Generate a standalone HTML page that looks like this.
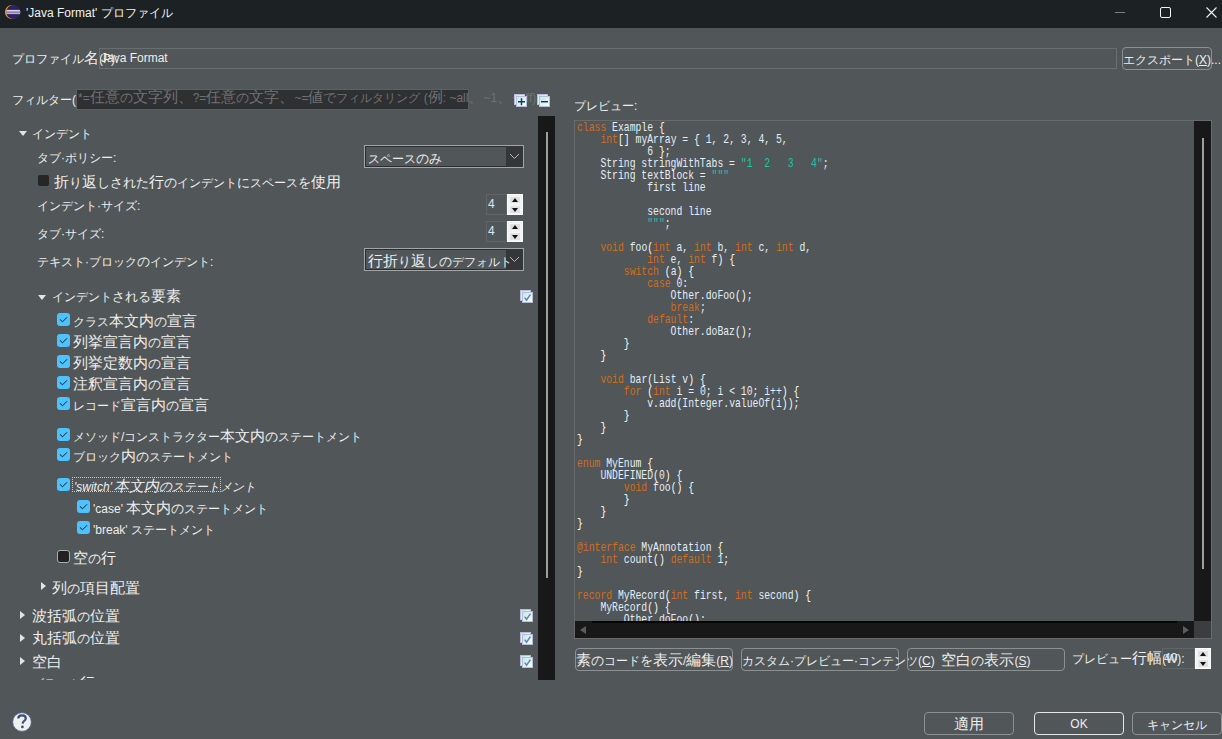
<!DOCTYPE html>
<html><head><meta charset="utf-8">
<style>
*{box-sizing:border-box}
html,body{margin:0;padding:0}
body{width:1222px;height:739px;overflow:hidden;position:relative;background:#515658;color:#eeeeee;font-family:"Liberation Sans",sans-serif;font-size:12px}
.a{position:absolute}
.t{position:absolute;white-space:nowrap;line-height:14px}
#title{left:0;top:0;width:1222px;height:28px;background:#1c2124}
.fld{position:absolute;border:1px solid #6b6e6f}
.btn{position:absolute;border:1px solid #8d9091;border-radius:4px;text-align:center;line-height:20px;white-space:nowrap}
.cb{position:absolute;width:13px;height:13px;border-radius:3px;background:#4cc2ff}
.cb svg{position:absolute;left:0;top:0}
.cbo{position:absolute;width:13px;height:13px;border-radius:3px;background:#222222;border:1px solid #aeaeae}
.cbn{position:absolute;width:11px;height:11px;border-radius:2px;background:#262626}
.tri-d{position:absolute;width:0;height:0;border-left:4px solid transparent;border-right:4px solid transparent;border-top:5px solid #e4e4e4}
.tri-r{position:absolute;width:0;height:0;border-top:4px solid transparent;border-bottom:4px solid transparent;border-left:5px solid #e4e4e4}
.combo{position:absolute;border:1px solid #a3a5a6;background:#515658}
.combo .in{position:absolute;left:0;top:0;right:0;bottom:0;border:1px solid #2c2f31}
.combo .dd{position:absolute;right:0;top:0;width:17px;bottom:0;background:#343638}
.spin{position:absolute;border:1px solid #626566}
.sb{position:absolute;background:#f0f0f0;border:1px solid #fdfdfd}
.scroll{position:absolute;background:#181818}
pre{margin:0;font-family:"Liberation Mono",monospace;font-size:13px;line-height:12px;color:#e4eefa}
.kj{font-size:15px;line-height:0}.hg{font-size:13px;line-height:0}
.k{color:#d06d1c}.s{color:#17c6a3}.b{color:#f9faf4}
</style></head><body>
<div class="a" id="title">
<svg class="a" style="left:4px;top:4px" width="18" height="16" viewBox="0 0 18 16">
<defs><clipPath id="ec"><circle cx="9.3" cy="8" r="7"/></clipPath></defs>
<circle cx="8" cy="8" r="7.1" fill="#f0961c"/>
<circle cx="9.3" cy="8" r="7" fill="#2e1f66"/>
<g clip-path="url(#ec)"><rect x="0" y="5.9" width="18" height="4.2" fill="#dcd8e6"/><rect x="0" y="7.3" width="18" height="2.1" fill="#8a84a8"/></g>
</svg>
<div class="t" style="left:26px;top:6px;color:#f2f2f2">'Java Format' プロファイル</div>
<div class="a" style="left:1115px;top:12px;width:10px;height:1px;background:#7b7f81"></div>
<div class="a" style="left:1160px;top:7px;width:11px;height:11px;border:1px solid #f4f4f4;border-radius:2px"></div>
<svg class="a" style="left:1205px;top:6px" width="13" height="13" viewBox="0 0 13 13"><path d="M1.5 1.5L11.5 11.5M11.5 1.5L1.5 11.5" stroke="#f0f0f0" stroke-width="1.1"/></svg>
</div>
<div class="t" style="left:12px;top:52px;">プロファイル<span class="kj">名</span>(P):</div>
<div class="fld" style="left:99px;top:48px;width:1018px;height:21px"></div>
<div class="t" style="left:101px;top:51px;">Java Format</div>
<div class="btn" style="left:1122px;top:47px;width:90px;height:23px;line-height:24px;">エクスポート(<u>X</u>)...</div>
<div class="t" style="left:12px;top:93px;">フィルター(F):</div>
<div class="a" style="left:76px;top:89px;width:393px;height:21px;background:#2f3031;border:1px solid #5d6061"></div>
<div class="t" style="left:78px;top:91px;color:#6f7273">*=<span class="kj">任意</span><span class="hg">の</span><span class="kj">文字列、</span>?=<span class="kj">任意</span><span class="hg">の</span><span class="kj">文字、</span>~=<span class="kj">値</span><span class="hg">で</span>フィルタリング (<span class="kj">例</span>: ~all<span class="kj">、</span>~1<span class="kj">、</span>~off)</div>
<svg class="a" style="left:514px;top:94px" width="14" height="14" viewBox="0 0 14 14">
<defs><linearGradient id="ig" x1="0" y1="0" x2="1" y2="1"><stop offset="0" stop-color="#bfe6e6"/><stop offset="1" stop-color="#ffffff"/></linearGradient></defs>
<rect x="0.5" y="0.5" width="10" height="10" fill="url(#ig)" stroke="#b9bdd9"/>
<rect x="2.5" y="2.5" width="10" height="10" fill="url(#ig)" stroke="#b9bdd9"/>
<path d="M7.5 4.2V11.2M4 7.7H11" stroke="#0d3f70" stroke-width="1.5"/></svg>
<svg class="a" style="left:537px;top:94px" width="14" height="14" viewBox="0 0 14 14">
<rect x="0.5" y="0.5" width="10" height="10" fill="url(#ig)" stroke="#b9bdd9"/>
<rect x="2.5" y="2.5" width="10" height="10" fill="url(#ig)" stroke="#b9bdd9"/>
<path d="M4 7.7H11" stroke="#0d3f70" stroke-width="1.5"/></svg>
<div class="t" style="left:574px;top:99px;">プレビュー:</div>
<div class="a" style="left:0;top:116px;width:538px;height:564px;overflow:hidden"><div class="a" style="left:0;top:-116px;width:538px;height:800px"><div class="tri-d" style="left:19px;top:131px"></div>
<div class="t" style="left:32px;top:127px;">インデント</div>
<div class="t" style="left:37px;top:151px;">タブ·ポリシー:</div>
<div class="cbn" style="left:38px;top:175px"></div>
<div class="t" style="left:54px;top:176px;"><span class="kj">折</span><span class="hg">り</span><span class="kj">返</span><span class="hg">しされた</span><span class="kj">行</span><span class="hg">の</span>インデント<span class="hg">に</span>スペース<span class="hg">を</span><span class="kj">使用</span></div>
<div class="t" style="left:37px;top:199px;">インデント·サイズ:</div>
<div class="t" style="left:37px;top:227px;">タブ·サイズ:</div>
<div class="t" style="left:37px;top:255px;">テキスト·ブロック<span class="hg">の</span>インデント:</div>
<div class="tri-d" style="left:38px;top:295px"></div>
<div class="t" style="left:52px;top:290px;">インデント<span class="hg">される</span><span class="kj">要素</span></div>
<svg class="a" style="left:520px;top:290px" width="14" height="14" viewBox="0 0 14 14">
<rect x="0.5" y="0.5" width="10" height="10" fill="url(#ig)" stroke="#b9bdd9"/>
<rect x="2.5" y="2.5" width="10" height="10" fill="url(#ig)" stroke="#b9bdd9"/>
<path d="M4.6 7.6L6.6 10.2L10.4 4.6" fill="none" stroke="#5b87ae" stroke-width="1.5"/>
</svg>
<div class="cb" style="left:57px;top:313px"><svg width="13" height="13" viewBox="0 0 13 13"><path d="M2.9 6.4L5.5 8.8L10 4.3" fill="none" stroke="#1b1b1b" stroke-width="1"/></svg></div>
<div class="t" style="left:73px;top:315px;">クラス<span class="kj">本文内</span><span class="hg">の</span><span class="kj">宣言</span></div>
<div class="cb" style="left:57px;top:334px"><svg width="13" height="13" viewBox="0 0 13 13"><path d="M2.9 6.4L5.5 8.8L10 4.3" fill="none" stroke="#1b1b1b" stroke-width="1"/></svg></div>
<div class="t" style="left:73px;top:336px;"><span class="kj">列挙宣言内</span><span class="hg">の</span><span class="kj">宣言</span></div>
<div class="cb" style="left:57px;top:355px"><svg width="13" height="13" viewBox="0 0 13 13"><path d="M2.9 6.4L5.5 8.8L10 4.3" fill="none" stroke="#1b1b1b" stroke-width="1"/></svg></div>
<div class="t" style="left:73px;top:357px;"><span class="kj">列挙定数内</span><span class="hg">の</span><span class="kj">宣言</span></div>
<div class="cb" style="left:57px;top:376px"><svg width="13" height="13" viewBox="0 0 13 13"><path d="M2.9 6.4L5.5 8.8L10 4.3" fill="none" stroke="#1b1b1b" stroke-width="1"/></svg></div>
<div class="t" style="left:73px;top:378px;"><span class="kj">注釈宣言内</span><span class="hg">の</span><span class="kj">宣言</span></div>
<div class="cb" style="left:57px;top:397px"><svg width="13" height="13" viewBox="0 0 13 13"><path d="M2.9 6.4L5.5 8.8L10 4.3" fill="none" stroke="#1b1b1b" stroke-width="1"/></svg></div>
<div class="t" style="left:73px;top:399px;">レコード<span class="kj">宣言内</span><span class="hg">の</span><span class="kj">宣言</span></div>
<div class="cb" style="left:57px;top:428px"><svg width="13" height="13" viewBox="0 0 13 13"><path d="M2.9 6.4L5.5 8.8L10 4.3" fill="none" stroke="#1b1b1b" stroke-width="1"/></svg></div>
<div class="t" style="left:73px;top:430px;">メソッド/コンストラクター<span class="kj">本文内</span><span class="hg">の</span>ステートメント</div>
<div class="cb" style="left:57px;top:448px"><svg width="13" height="13" viewBox="0 0 13 13"><path d="M2.9 6.4L5.5 8.8L10 4.3" fill="none" stroke="#1b1b1b" stroke-width="1"/></svg></div>
<div class="t" style="left:73px;top:450px;">ブロック<span class="kj">内</span><span class="hg">の</span>ステートメント</div>
<div class="cb" style="left:57px;top:478px"><svg width="13" height="13" viewBox="0 0 13 13"><path d="M2.9 6.4L5.5 8.8L10 4.3" fill="none" stroke="#1b1b1b" stroke-width="1"/></svg></div>
<div class="t" style="left:74px;top:480px;font-style:italic">'switch' <span style="display:inline-block;font-style:normal;transform:skewX(-12deg)"><span class="kj">本文内</span><span class="hg">の</span>ステートメント</span></div>
<div class="a" style="left:72px;top:477px;width:149px;height:15px;border:1px dotted #c8c8c8"></div>
<div class="cb" style="left:77px;top:500px"><svg width="13" height="13" viewBox="0 0 13 13"><path d="M2.9 6.4L5.5 8.8L10 4.3" fill="none" stroke="#1b1b1b" stroke-width="1"/></svg></div>
<div class="t" style="left:93px;top:502px;">'case' <span class="kj">本文内</span><span class="hg">の</span>ステートメント</div>
<div class="cb" style="left:77px;top:521px"><svg width="13" height="13" viewBox="0 0 13 13"><path d="M2.9 6.4L5.5 8.8L10 4.3" fill="none" stroke="#1b1b1b" stroke-width="1"/></svg></div>
<div class="t" style="left:93px;top:523px;">'break' ステートメント</div>
<div class="cbo" style="left:57px;top:550px"></div>
<div class="t" style="left:73px;top:552px;"><span class="kj">空</span><span class="hg">の</span><span class="kj">行</span></div>
<div class="tri-r" style="left:41px;top:582px"></div>
<div class="t" style="left:52px;top:582px;"><span class="kj">列</span><span class="hg">の</span><span class="kj">項目配置</span></div>
<div class="tri-r" style="left:20px;top:611px"></div>
<div class="t" style="left:32px;top:610px;"><span class="kj">波括弧</span><span class="hg">の</span><span class="kj">位置</span></div>
<div class="tri-r" style="left:20px;top:634px"></div>
<div class="t" style="left:32px;top:632px;"><span class="kj">丸括弧</span><span class="hg">の</span><span class="kj">位置</span></div>
<div class="tri-r" style="left:20px;top:657px"></div>
<div class="t" style="left:32px;top:656px;"><span class="kj">空白</span></div>
<div class="tri-r" style="left:20px;top:680px"></div>
<div class="t" style="left:32px;top:677px;">ブランク<span class="kj">行</span></div>
<svg class="a" style="left:520px;top:609px" width="14" height="14" viewBox="0 0 14 14">
<rect x="0.5" y="0.5" width="10" height="10" fill="url(#ig)" stroke="#b9bdd9"/>
<rect x="2.5" y="2.5" width="10" height="10" fill="url(#ig)" stroke="#b9bdd9"/>
<path d="M4.6 7.6L6.6 10.2L10.4 4.6" fill="none" stroke="#5b87ae" stroke-width="1.5"/>
</svg>
<svg class="a" style="left:520px;top:632px" width="14" height="14" viewBox="0 0 14 14">
<rect x="0.5" y="0.5" width="10" height="10" fill="url(#ig)" stroke="#b9bdd9"/>
<rect x="2.5" y="2.5" width="10" height="10" fill="url(#ig)" stroke="#b9bdd9"/>
<path d="M4.6 7.6L6.6 10.2L10.4 4.6" fill="none" stroke="#5b87ae" stroke-width="1.5"/>
</svg>
<svg class="a" style="left:520px;top:655px" width="14" height="14" viewBox="0 0 14 14">
<rect x="0.5" y="0.5" width="10" height="10" fill="url(#ig)" stroke="#b9bdd9"/>
<rect x="2.5" y="2.5" width="10" height="10" fill="url(#ig)" stroke="#b9bdd9"/>
<path d="M4.6 7.6L6.6 10.2L10.4 4.6" fill="none" stroke="#5b87ae" stroke-width="1.5"/>
</svg></div></div>
<div class="scroll" style="left:538px;top:116px;width:17px;height:564px"></div><div class="a" style="left:546px;top:132px;width:2px;height:446px;background:#9e9e9e"></div>
<div class="combo" style="left:364px;top:145px;width:160px;height:23px"><div class="in"></div><div class="dd"><svg class="a" style="right:3px;top:7px" width="11" height="7" viewBox="0 0 11 7"><path d="M1 1L5.5 5.5L10 1" fill="none" stroke="#b8b8b8" stroke-width="1"/></svg></div></div><div class="t" style="left:368px;top:152px;">スペース<span class="hg">のみ</span></div><div class="combo" style="left:364px;top:248px;width:160px;height:23px"><div class="in"></div><div class="dd"><svg class="a" style="right:3px;top:7px" width="11" height="7" viewBox="0 0 11 7"><path d="M1 1L5.5 5.5L10 1" fill="none" stroke="#b8b8b8" stroke-width="1"/></svg></div></div><div class="t" style="left:368px;top:255px;"><span class="kj">行折</span><span class="hg">り</span><span class="kj">返</span><span class="hg">しの</span>デフォルト</div><div class="spin" style="left:486px;top:194px;width:21px;height:21px"></div><div class="t" style="left:488px;top:197px;color:#d9e8f7">4</div>
<div class="sb" style="left:507px;top:194px;width:16px;height:21px">
<div class="a" style="left:1px;top:1px;width:12px;height:8px;background:#e1e1e1;border:1px solid #f6f6f6"></div>
<div class="a" style="left:1px;top:10px;width:12px;height:9px;background:#e1e1e1;border:1px solid #f6f6f6"></div>
<div class="a" style="left:4px;top:3px;width:0;height:0;border-left:3.5px solid transparent;border-right:3.5px solid transparent;border-bottom:4px solid #111"></div>
<div class="a" style="left:4px;top:13px;width:0;height:0;border-left:3.5px solid transparent;border-right:3.5px solid transparent;border-top:4px solid #111"></div>
</div><div class="spin" style="left:486px;top:221px;width:21px;height:21px"></div><div class="t" style="left:488px;top:224px;color:#d9e8f7">4</div>
<div class="sb" style="left:507px;top:221px;width:16px;height:21px">
<div class="a" style="left:1px;top:1px;width:12px;height:8px;background:#e1e1e1;border:1px solid #f6f6f6"></div>
<div class="a" style="left:1px;top:10px;width:12px;height:9px;background:#e1e1e1;border:1px solid #f6f6f6"></div>
<div class="a" style="left:4px;top:3px;width:0;height:0;border-left:3.5px solid transparent;border-right:3.5px solid transparent;border-bottom:4px solid #111"></div>
<div class="a" style="left:4px;top:13px;width:0;height:0;border-left:3.5px solid transparent;border-right:3.5px solid transparent;border-top:4px solid #111"></div>
</div>
<div class="a" style="left:574px;top:120px;width:638px;height:519px;border:1px solid #686a6b"></div>
<div class="a" style="left:575px;top:121px;width:619px;height:500px;overflow:hidden">
<div class="a" style="left:242px;top:0;width:1px;height:500px;background:#74484a"></div>
<pre class="a" style="left:2px;top:1px;transform:scaleX(0.75);transform-origin:0 0"><span class="k">class</span> Example <span class="b">{</span>
    <span class="k">int</span><span class="b">[]</span> myArray = <span class="b">{</span> 1, 2, 3, 4, 5,
            6 <span class="b">}</span>;
    String stringWithTabs = <span class="s">"1  2   3   4"</span>;
    String textBlock = <span class="s">"""</span>
            first line

            second line
            <span class="s">"""</span>;

    <span class="k">void</span> foo<span class="b">(</span><span class="k">int</span> a, <span class="k">int</span> b, <span class="k">int</span> c, <span class="k">int</span> d,
            <span class="k">int</span> e, <span class="k">int</span> f<span class="b">)</span> <span class="b">{</span>
        <span class="k">switch</span> <span class="b">(</span>a<span class="b">)</span> <span class="b">{</span>
            <span class="k">case</span> 0:
                Other.doFoo<span class="b">()</span>;
                <span class="k">break</span>;
            <span class="k">default</span>:
                Other.doBaz<span class="b">()</span>;
        <span class="b">}</span>
    <span class="b">}</span>

    <span class="k">void</span> bar<span class="b">(</span>List v<span class="b">)</span> <span class="b">{</span>
        <span class="k">for</span> <span class="b">(</span><span class="k">int</span> i = 0; i &lt; 10; i++<span class="b">)</span> <span class="b">{</span>
            v.add<span class="b">(</span>Integer.valueOf<span class="b">(</span>i<span class="b">))</span>;
        <span class="b">}</span>
    <span class="b">}</span>
<span class="b">}</span>

<span class="k">enum</span> MyEnum <span class="b">{</span>
    UNDEFINED<span class="b">(</span>0<span class="b">)</span> <span class="b">{</span>
        <span class="k">void</span> foo<span class="b">()</span> <span class="b">{</span>
        <span class="b">}</span>
    <span class="b">}</span>
<span class="b">}</span>

<span class="k">@interface</span> MyAnnotation <span class="b">{</span>
    <span class="k">int</span> count<span class="b">()</span> <span class="k">default</span> 1;
<span class="b">}</span>

<span class="k">record</span> MyRecord<span class="b">(</span><span class="k">int</span> first, <span class="k">int</span> second<span class="b">)</span> <span class="b">{</span>
    MyRecord<span class="b">()</span> <span class="b">{</span>
        Other.doFoo<span class="b">()</span>;
    <span class="b">}</span>
<span class="b">}</span></pre>
</div>
<div class="scroll" style="left:1194px;top:121px;width:17px;height:500px"></div>
<div class="a" style="left:1202px;top:138px;width:2px;height:431px;background:#9e9e9e"></div>
<div class="scroll" style="left:575px;top:621px;width:619px;height:17px"></div>
<div class="a" style="left:592px;top:621px;width:585px;height:2px;background:#050505"></div>
<div class="a" style="left:1194px;top:621px;width:17px;height:17px;background:#3b3d3e"></div>
<div class="a" style="left:580px;top:626px;width:0;height:0;border-top:4px solid transparent;border-bottom:4px solid transparent;border-right:6px solid #5c5c5c"></div>
<div class="a" style="left:1183px;top:626px;width:0;height:0;border-top:4px solid transparent;border-bottom:4px solid transparent;border-left:6px solid #5c5c5c"></div>
<div class="btn" style="left:575px;top:648px;width:158px;height:23px;line-height:24px;"><span class="kj">素</span><span class="hg">の</span>コード<span class="hg">を</span><span class="kj">表示</span>/<span class="kj">編集</span>(<u>R</u>)</div><div class="btn" style="left:741px;top:648px;width:158px;height:23px;line-height:24px;">カスタム·プレビュー·コンテンツ(<u>C</u>)</div><div class="btn" style="left:907px;top:648px;width:158px;height:23px;line-height:24px;"><span class="kj">空白</span><span class="hg">の</span><span class="kj">表示</span>(<u>S</u>)</div><div class="t" style="left:1072px;top:652px;">プレビュー<span class="kj">行幅</span>(W):</div><div class="spin" style="left:1162px;top:648px;width:33px;height:21px"></div><div class="t" style="left:1164px;top:651px;color:#d9e8f7">40</div>
<div class="sb" style="left:1195px;top:648px;width:16px;height:21px">
<div class="a" style="left:1px;top:1px;width:12px;height:8px;background:#e1e1e1;border:1px solid #f6f6f6"></div>
<div class="a" style="left:1px;top:10px;width:12px;height:9px;background:#e1e1e1;border:1px solid #f6f6f6"></div>
<div class="a" style="left:4px;top:3px;width:0;height:0;border-left:3.5px solid transparent;border-right:3.5px solid transparent;border-bottom:4px solid #111"></div>
<div class="a" style="left:4px;top:13px;width:0;height:0;border-left:3.5px solid transparent;border-right:3.5px solid transparent;border-top:4px solid #111"></div>
</div>
<svg class="a" style="left:11px;top:711px" width="22" height="22" viewBox="0 0 22 22">
<circle cx="11" cy="11" r="9.4" fill="#efefef" stroke="#46608a" stroke-width="0.9"/>
<path d="M7.3 7.4C7.3 5.4 9 4.4 11 4.4C13.2 4.4 14.8 5.6 14.8 7.4C14.8 9.6 11.8 9.9 11.6 12.6" fill="none" stroke="#3a5078" stroke-width="2.2"/>
<circle cx="11.4" cy="15.9" r="1.4" fill="#3a5078"/></svg>

<div class="btn" style="left:924px;top:712px;width:90px;height:23px;line-height:24px;"><span class="kj">適用</span></div><div class="btn" style="left:1034px;top:712px;width:90px;height:23px;line-height:23px;border-color:#e6e6e6">OK</div><div class="btn" style="left:1132px;top:712px;width:90px;height:23px;line-height:24px;">キャンセル</div>
</body></html>
